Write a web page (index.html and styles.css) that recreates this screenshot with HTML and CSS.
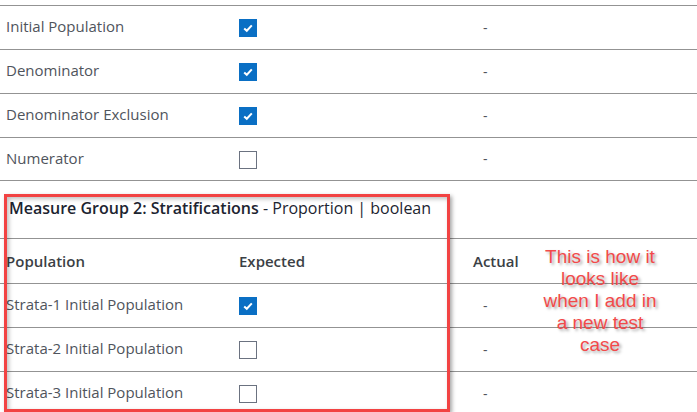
FILE: index.html
```html
<!DOCTYPE html>
<html>
<head>
<meta charset="utf-8">
<link rel="stylesheet" href="styles.css">
</head>
<body>
<div class="page">
  <div class="table">
    <div class="row">
      <div class="cell name">Initial Population</div>
      <div class="cell"><span class="cb checked"><svg viewBox="0 0 18 18" width="18" height="18"><path d="M5.2 9.4 L7.8 11.8 L12.8 6.4" fill="none" stroke="#fff" stroke-width="2"/></svg></span></div>
      <div class="cell dash">-</div>
    </div>
    <div class="row">
      <div class="cell name">Denominator</div>
      <div class="cell"><span class="cb checked"><svg viewBox="0 0 18 18" width="18" height="18"><path d="M5.2 9.4 L7.8 11.8 L12.8 6.4" fill="none" stroke="#fff" stroke-width="2"/></svg></span></div>
      <div class="cell dash">-</div>
    </div>
    <div class="row">
      <div class="cell name">Denominator Exclusion</div>
      <div class="cell"><span class="cb checked"><svg viewBox="0 0 18 18" width="18" height="18"><path d="M5.2 9.4 L7.8 11.8 L12.8 6.4" fill="none" stroke="#fff" stroke-width="2"/></svg></span></div>
      <div class="cell dash">-</div>
    </div>
    <div class="row last">
      <div class="cell name">Numerator</div>
      <div class="cell"><span class="cb"></span></div>
      <div class="cell dash">-</div>
    </div>
  </div>

  <div class="group-title"><strong>Measure Group 2: Stratifications</strong> - Proportion | boolean</div>

  <div class="table strat">
    <div class="row head">
      <div class="cell name">Population</div>
      <div class="cell">Expected</div>
      <div class="cell actual">Actual</div>
    </div>
    <div class="row">
      <div class="cell name">Strata-1 Initial Population</div>
      <div class="cell"><span class="cb checked"><svg viewBox="0 0 18 18" width="18" height="18"><path d="M5.2 9.4 L7.8 11.8 L12.8 6.4" fill="none" stroke="#fff" stroke-width="2"/></svg></span></div>
      <div class="cell dash">-</div>
    </div>
    <div class="row">
      <div class="cell name">Strata-2 Initial Population</div>
      <div class="cell"><span class="cb"></span></div>
      <div class="cell dash">-</div>
    </div>
    <div class="row">
      <div class="cell name">Strata-3 Initial Population</div>
      <div class="cell"><span class="cb"></span></div>
      <div class="cell dash">-</div>
    </div>
  </div>

  <div class="highlight"></div>
  <div class="note">This is how it<br>looks like<br>when I add in<br>a new test<br>case</div>
</div>
</body>
</html>
```

FILE: styles.css
```css
html, body {
  margin: 0;
  padding: 0;
  background: #fff;
}
.page {
  position: relative;
  width: 697px;
  height: 412px;
  overflow: hidden;
  padding-top: 5px;
  box-sizing: border-box;
  font-family: "Open Sans", Inter, sans-serif;
  font-size: 15px;
  color: #4f545c;
}
.row {
  display: grid;
  grid-template-columns: 239px 234px 1fr;
  align-items: center;
  height: 44px;
  box-sizing: border-box;
  border-top: 1px solid #939393;
}
.row.last {
  border-bottom: 1px solid #939393;
}
.cell {
  line-height: 18px;
  margin-top: -3px;
}
.cell.name {
  padding-left: 6px;
}
.cell.dash {
  padding-left: 10px;
  padding-top: 3px;
  font-size: 14px;
}
.cb {
  display: block;
  width: 18px;
  height: 18px;
  box-sizing: border-box;
  border: 1.5px solid #6b7280;
  background: #fff;
  margin-top: 4px;
}
.cb.checked {
  border: none;
  background: #0a6fc4;
}
.cb svg {
  display: block;
}
.group-title {
  height: 57px;
  box-sizing: border-box;
  padding: 17px 0 0 9px;
  font-size: 16px;
  line-height: 20px;
  color: #1c2430;
}
.group-title strong {
  font-weight: 600;
}
.row.head {
  height: 45px;
  font-weight: 600;
  color: #3b3f45;
}
.row.head .cell {
  margin-top: -1px;
}
.highlight {
  position: absolute;
  left: 4px;
  top: 194px;
  width: 446px;
  height: 218px;
  box-sizing: border-box;
  border: 3px solid #f24343;
  box-shadow: 2px 2px 4px rgba(0,0,0,0.35), inset 2px 2px 4px rgba(0,0,0,0.25);
}
.note {
  position: absolute;
  left: 525px;
  top: 246px;
  width: 150px;
  text-align: center;
  font-family: "Liberation Sans", Arial, sans-serif;
  font-size: 19px;
  line-height: 22px;
  color: #f24a4a;
  text-shadow: 2px 2px 3px rgba(0,0,0,0.35);
}
```
